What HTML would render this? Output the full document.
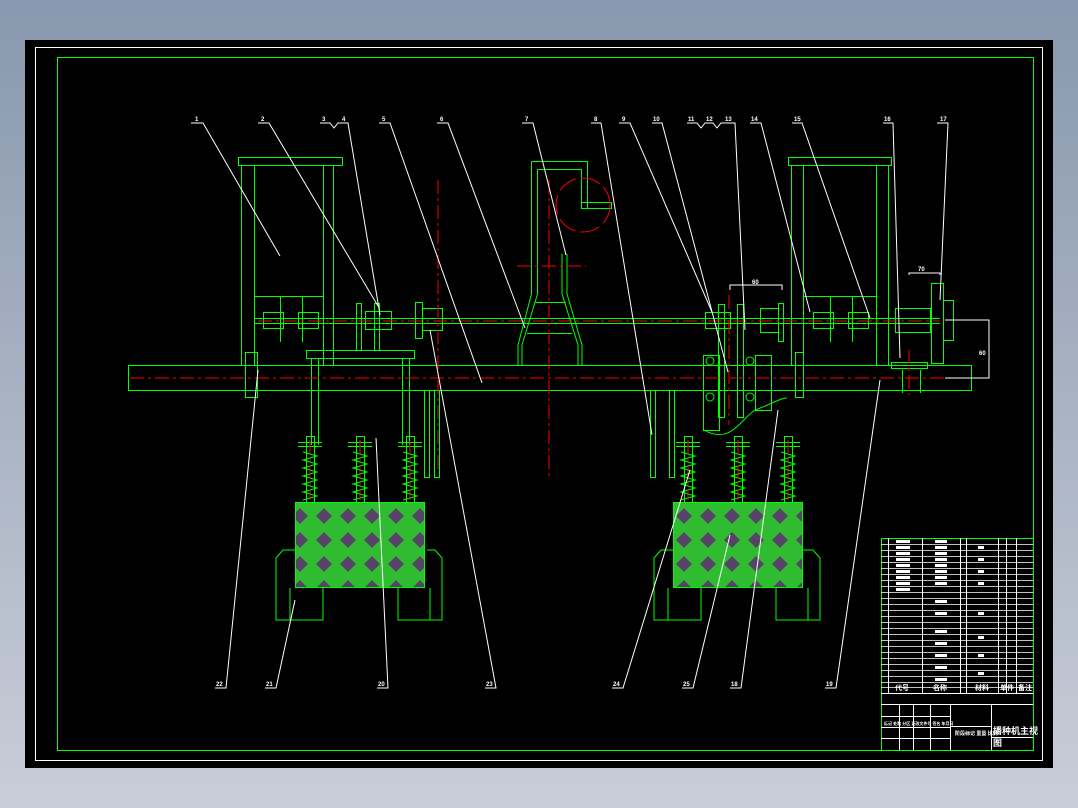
<!DOCTYPE html>
<html><head><meta charset="utf-8"><style>
html,body{margin:0;padding:0;width:1078px;height:808px;overflow:hidden;background:linear-gradient(#8898ae,#c9cdd8);}
svg{display:block}
text{font-family:"Liberation Sans","Noto Sans CJK SC",sans-serif;fill:#fff;font-size:6px;font-weight:bold}
</style></head><body>
<svg width="1078" height="808" viewBox="0 0 1078 808" xmlns="http://www.w3.org/2000/svg">
<defs>
<pattern id="h" width="24" height="24" patternUnits="userSpaceOnUse">
<rect width="24" height="24" fill="#30bc30"/>
<path d="M12 4 L20 12 L12 20 L4 12Z" fill="#564466"/>
</pattern>
</defs>
<rect x="25" y="40" width="1028" height="728" fill="#000"/>
<rect x="35.5" y="47.5" width="1007" height="713" fill="none" stroke="#fff"/>
<rect x="57.5" y="57.5" width="976" height="693" fill="none" stroke="#0f0"/>

<g fill="none" stroke="#0f0" stroke-width="1">
<rect x="128.5" y="365.5" width="843" height="25"/>
<line x1="255" y1="318.5" x2="940" y2="318.5"/><line x1="255" y1="323.5" x2="940" y2="323.5"/>
<rect x="238.5" y="157.5" width="104" height="8"/>
<line x1="241.5" y1="165" x2="241.5" y2="365"/><line x1="254.5" y1="165" x2="254.5" y2="365"/>
<line x1="323.5" y1="165" x2="323.5" y2="365"/><line x1="333.5" y1="165" x2="333.5" y2="365"/>
<line x1="254" y1="296.5" x2="323" y2="296.5"/>
<rect x="263.5" y="312.5" width="20" height="16"/><rect x="298.5" y="312.5" width="20" height="16"/>
<line x1="280.5" y1="297" x2="280.5" y2="342"/><line x1="302.5" y1="297" x2="302.5" y2="342"/>
<rect x="788.5" y="157.5" width="103" height="8"/>
<line x1="791.5" y1="165" x2="791.5" y2="365"/><line x1="803.5" y1="165" x2="803.5" y2="365"/>
<line x1="876.5" y1="165" x2="876.5" y2="365"/><line x1="888.5" y1="165" x2="888.5" y2="365"/>
<line x1="803" y1="296.5" x2="876" y2="296.5"/>
<rect x="813.5" y="312.5" width="20" height="16"/><rect x="848.5" y="312.5" width="20" height="16"/>
<line x1="830.5" y1="297" x2="830.5" y2="342"/><line x1="852.5" y1="297" x2="852.5" y2="342"/>
<rect x="895.5" y="308.5" width="35" height="24"/>
<rect x="931.5" y="283.5" width="12" height="80"/>
<rect x="943.5" y="300.5" width="10" height="40"/>
<rect x="891.5" y="362.5" width="36" height="6"/>
<line x1="902.5" y1="370" x2="902.5" y2="393"/><line x1="920.5" y1="370" x2="920.5" y2="393"/>
<rect x="245.5" y="352.5" width="12" height="45"/>
<rect x="795.5" y="352.5" width="8" height="45"/>
<rect x="306.5" y="350.5" width="108" height="8"/>
<line x1="311.5" y1="358" x2="311.5" y2="445"/><line x1="318.5" y1="358" x2="318.5" y2="445"/>
<line x1="402.5" y1="358" x2="402.5" y2="445"/><line x1="409.5" y1="358" x2="409.5" y2="445"/>
<rect x="356.5" y="303.5" width="5" height="47"/><rect x="374.5" y="303.5" width="5" height="47"/>
<rect x="365.5" y="311.5" width="26" height="18"/>
<rect x="415.5" y="302.5" width="7" height="36"/><rect x="422.5" y="308.5" width="20" height="22"/>
<rect x="424.5" y="390.5" width="5" height="87"/><rect x="434.5" y="390.5" width="5" height="87"/>
<rect x="650.5" y="390.5" width="5" height="87"/><rect x="669.5" y="390.5" width="5" height="87"/>
<path d="M531.5 161.5 H587.5 V209 M537.5 169.5 H581.5 V204 M531.5 161.5 V294 M537.5 169.5 V294"/>
<rect x="581.5" y="202.5" width="30" height="6"/>
<path d="M531.5 294 L518 345 V365 M537.5 294 L522 345 V365 M562 254 V294 L578 345 V365 M567 254 V294 L582 345 V365 M535 302.5 H566 M527 333.5 H572"/>
<rect x="705.5" y="312.5" width="25" height="16"/>
<rect x="718.5" y="304.5" width="6" height="113"/><rect x="737.5" y="304.5" width="6" height="113"/>
<rect x="760.5" y="308.5" width="18" height="24"/><rect x="778.5" y="303.5" width="5" height="38"/>
<rect x="703.5" y="355.5" width="16" height="75"/><rect x="755.5" y="355.5" width="16" height="55"/>
<circle cx="710" cy="361" r="4"/><circle cx="710" cy="397" r="4"/><circle cx="750" cy="361" r="4"/><circle cx="750" cy="397" r="4"/>
<path d="M704 430 C730 445 740 420 755 410 C770 405 780 398 787 398"/>
<g id="sp">
<rect x="306.5" y="436.5" width="8" height="66"/><line x1="298" y1="442.5" x2="322" y2="442.5"/><line x1="298" y1="446.5" x2="322" y2="446.5"/>
<path d="M303 452 l14 4 l-14 4 l14 4 l-14 4 l14 4 l-14 4 l14 4 l-14 4 l14 4 l-14 4 l14 4 l-14 4"/>
</g>
<use href="#sp" x="50"/><use href="#sp" x="100"/>
<use href="#sp" x="378"/><use href="#sp" x="428"/><use href="#sp" x="478"/>
<path d="M295 550 H283 L276 558 V620 H323 V588 M427 550 H435 L442 558 V620 H398 V588 M290 588 V620 M430 588 V620"/>
<path d="M673 550 H661 L654 558 V620 H701 V588 M802 550 H813 L820 558 V620 H776 V588 M668 588 V620 M808 588 V620"/>
</g>
<rect x="295.5" y="502.5" width="129" height="85" fill="url(#h)" stroke="#0f0"/>
<rect x="673.5" y="502.5" width="129" height="85" fill="url(#h)" stroke="#0f0"/>

<g stroke="#f00" fill="none" stroke-dasharray="14 4 3 4">
<line x1="130" y1="378" x2="970" y2="378"/>
<line x1="258" y1="321" x2="940" y2="321"/>
<line x1="438" y1="180" x2="438" y2="470"/>
<line x1="549" y1="180" x2="549" y2="477"/>
<line x1="729" y1="295" x2="729" y2="425"/>
<line x1="909" y1="350" x2="909" y2="395"/>
<line x1="517" y1="266" x2="586" y2="266"/>
<line x1="310" y1="440" x2="310" y2="500"/><line x1="360" y1="440" x2="360" y2="500"/><line x1="410" y1="440" x2="410" y2="500"/>
<line x1="688" y1="440" x2="688" y2="500"/><line x1="738" y1="440" x2="738" y2="500"/><line x1="788" y1="440" x2="788" y2="500"/>
<circle cx="583" cy="205" r="27" stroke-dasharray="20 5"/>
</g>

<g stroke="#fff" fill="none" stroke-width="1">
<path d="M191 123 H203 L280 256"/>
<path d="M258 123 H269 L378 306"/>
<path d="M320 123 H330 L334 128 L338 123 H348 L380 315"/>
<path d="M379 123 H390 L482 383"/>
<path d="M437 123 H448 L525 328"/>
<path d="M522 123 H533 L566 255"/>
<path d="M591 123 H601 L652 435"/>
<path d="M619 123 H630 L712 312"/>
<path d="M652 123 H662 L728 372"/>
<path d="M687 123 H697 L701 128 L705 123 H713 L717 128 L721 123 H735 L745 330"/>
<path d="M750 123 H761 L810 312"/>
<path d="M792 123 H802 L870 318"/>
<path d="M883 123 H893 L900 358"/>
<path d="M937 123 H948 L940 300"/>
<path d="M215 688 H226 L258 370"/>
<path d="M265 688 H276 L295 600"/>
<path d="M377 688 H388 L376 438"/>
<path d="M485 688 H496 L430 330"/>
<path d="M612 688 H623 L690 470"/>
<path d="M682 688 H693 L730 535"/>
<path d="M730 688 H741 L778 410"/>
<path d="M825 688 H836 L880 380"/>
<path d="M730 290 V285 H782 V290"/><path d="M909 275 V273 H940 V275"/>
<path d="M945 320 H989 V378 H945"/>
</g>
<g>
<text x="195" y="121">1</text><text x="261" y="121">2</text><text x="322" y="121">3</text><text x="342" y="121">4</text>
<text x="382" y="121">5</text><text x="440" y="121">6</text><text x="525" y="121">7</text><text x="594" y="121">8</text>
<text x="622" y="121">9</text><text x="653" y="121">10</text><text x="688" y="121">11</text><text x="706" y="121">12</text><text x="725" y="121">13</text>
<text x="751" y="121">14</text><text x="794" y="121">15</text><text x="884" y="121">16</text><text x="940" y="121">17</text>
<text x="216" y="686">22</text><text x="266" y="686">21</text><text x="378" y="686">20</text><text x="486" y="686">23</text>
<text x="613" y="686">24</text><text x="683" y="686">25</text><text x="731" y="686">18</text><text x="826" y="686">19</text>
<text x="752" y="284">60</text><text x="918" y="271">70</text><text x="979" y="355">60</text>
</g>

<g stroke="#fff" stroke-width="1" fill="none">
<rect x="881.5" y="538.5" width="152" height="212" stroke="#0f0"/>
<path d="M888.5 538V693 M922.5 538V693 M960.5 538V693 M966.5 538V693 M998.5 538V693 M1006.5 538V693 M1016.5 538V693"/>
<path d="M881 544.5H1033 M881 550.5H1033 M881 556.5H1033 M881 562.5H1033 M881 568.5H1033 M881 574.5H1033 M881 580.5H1033 M881 586.5H1033 M881 592.5H1033 M881 598.5H1033 M881 604.5H1033 M881 610.5H1033 M881 616.5H1033 M881 622.5H1033 M881 628.5H1033 M881 634.5H1033 M881 640.5H1033 M881 646.5H1033 M881 652.5H1033 M881 658.5H1033 M881 664.5H1033 M881 670.5H1033 M881 676.5H1033 M881 682.5H1033 M881 687.5H1033" stroke-width="0.8"/>
<path d="M881 693.5H1033 M881 704.5H1033 M950.5 704V750 M991.5 704V750 M991 737.5H1033 M950 726.5H991 M881 716.5H950 M881 727.5H950 M881 738.5H950"/>
<path d="M899.5 704V750 M913.5 704V750 M930.5 704V750"/>
</g>
<g>
<text x="895" y="690" style="font-size:7px">代号</text><text x="933" y="690" style="font-size:7px">名称</text>
<text x="975" y="690" style="font-size:7px">材料</text><text x="1000" y="690" style="font-size:7px">单件</text><text x="1018" y="690" style="font-size:7px">备注</text>
<text x="993" y="734" style="font-size:9px">播种机主视</text><text x="993" y="746" style="font-size:9px">图</text>
<text x="884" y="725" style="font-size:4px">标记 处数 分区 更改文件号 签名 年月日</text>
<text x="955" y="735" style="font-size:5px">阶段标记 重量 比例</text>
</g>
<g fill="#fff">
<rect x="896" y="540" width="14" height="3"/><rect x="896" y="546" width="14" height="3"/><rect x="896" y="552" width="14" height="3"/><rect x="896" y="558" width="14" height="3"/><rect x="896" y="564" width="14" height="3"/><rect x="896" y="570" width="14" height="3"/><rect x="896" y="576" width="14" height="3"/><rect x="896" y="582" width="14" height="3"/><rect x="896" y="588" width="14" height="3"/>
<rect x="935" y="540" width="12" height="3"/><rect x="935" y="546" width="12" height="3"/><rect x="935" y="552" width="12" height="3"/><rect x="935" y="558" width="12" height="3"/><rect x="935" y="564" width="12" height="3"/><rect x="935" y="570" width="12" height="3"/><rect x="935" y="576" width="12" height="3"/><rect x="935" y="582" width="12" height="3"/><rect x="935" y="600" width="12" height="3"/><rect x="935" y="612" width="12" height="3"/><rect x="935" y="630" width="12" height="3"/><rect x="935" y="642" width="12" height="3"/><rect x="935" y="654" width="12" height="3"/><rect x="935" y="666" width="12" height="3"/><rect x="935" y="678" width="12" height="3"/>
<rect x="978" y="546" width="6" height="3"/><rect x="978" y="558" width="6" height="3"/><rect x="978" y="570" width="6" height="3"/><rect x="978" y="582" width="6" height="3"/><rect x="978" y="612" width="6" height="3"/><rect x="978" y="636" width="6" height="3"/><rect x="978" y="654" width="6" height="3"/><rect x="978" y="672" width="6" height="3"/>
</g>
</svg>
</body></html>
